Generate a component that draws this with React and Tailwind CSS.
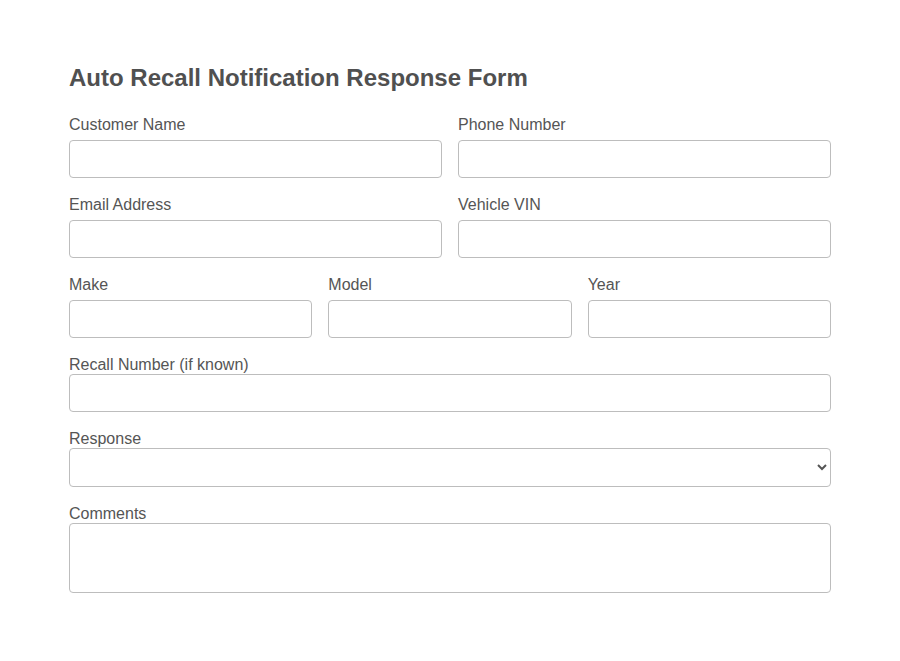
import React from "react";

const Label = ({ children, mb = "mb-[6px]" }) => (
  <label className={`block text-[16px] leading-[18px] pt-[1px] text-[#555] ${mb}`}>{children}</label>
);

const Input = () => (
  <input type="text" className="block w-full h-[38px] border border-[#bdbdbd] rounded-[4px] bg-white px-2 text-[16px] outline-none" />
);

export default function App() {
  return (
    <div className="min-h-[661px] bg-white" style={{ fontFamily: '"Liberation Sans", Arial, sans-serif' }}>
      <div className="w-[762px] mx-auto pt-[64px]">
        <h2 className="text-[24px] leading-[28px] font-bold text-[#505050] mb-[23px]">Auto Recall Notification Response Form</h2>
        <div className="grid grid-cols-2 gap-x-[16px]">
          <div>
            <Label>Customer Name</Label>
            <Input />
          </div>
          <div>
            <Label>Phone Number</Label>
            <Input />
          </div>
        </div>
        <div className="grid grid-cols-2 gap-x-[16px] mt-[17px]">
          <div>
            <Label>Email Address</Label>
            <Input />
          </div>
          <div>
            <Label>Vehicle VIN</Label>
            <Input />
          </div>
        </div>
        <div className="grid grid-cols-3 gap-x-[16px] mt-[17px]">
          <div>
            <Label>Make</Label>
            <Input />
          </div>
          <div>
            <Label>Model</Label>
            <Input />
          </div>
          <div>
            <Label>Year</Label>
            <Input />
          </div>
        </div>
        <div className="mt-[17px]">
          <Label mb="mb-0">Recall Number (if known)</Label>
          <Input />
        </div>
        <div className="mt-[17px]">
          <Label mb="mb-0">Response</Label>
          <select className="block w-full h-[39px] border border-[#bdbdbd] rounded-[4px] bg-white px-2 text-[16px] text-[#555] outline-none">
            <option value=""></option>
          </select>
        </div>
        <div className="mt-[17px]">
          <Label mb="mb-0">Comments</Label>
          <textarea className="block w-full h-[70px] border border-[#bdbdbd] rounded-[4px] bg-white px-2 text-[16px] outline-none resize-none" />
        </div>
      </div>
    </div>
  );
}
